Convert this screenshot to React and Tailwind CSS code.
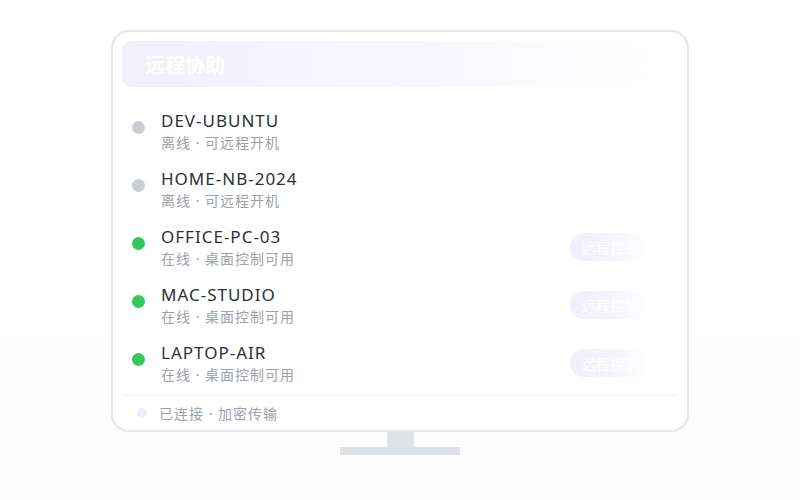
import React from 'react'

const devices = [
  { name: 'DEV-UBUNTU', online: false },
  { name: 'HOME-NB-2024', online: false },
  { name: 'OFFICE-PC-03', online: true },
  { name: 'MAC-STUDIO', online: true },
  { name: 'LAPTOP-AIR', online: true },
]

const App = () => {
  return (
    <div
      className="w-[800px] h-[500px] flex flex-col items-center pt-[30px] bg-gradient-to-b from-white from-50% to-[#fcfcfd]"
      style={{ fontFamily: '"Noto Sans", "Noto Sans CJK SC", sans-serif' }}
    >
      {/* monitor */}
      <div className="w-[578px] h-[402px] bg-white border-2 border-[#e4e6ea] rounded-[18px] px-[9px] pt-[9px] flex flex-col">
        {/* header */}
        <div className="h-[46px] rounded-[10px] bg-gradient-to-r from-[#f2effd] via-[#f8f6fe] to-white flex items-center justify-between pl-[23px] pr-[22px] pt-[3px] mr-[1px]">
          <span className="text-white text-[20px] font-bold">远程协助</span>
          <span className="text-white/60 text-[13px]">在线 3</span>
        </div>

        {/* device list */}
        <div className="flex-1 flex flex-col pt-[9px]">
          {devices.map((d) => (
            <div key={d.name} className="h-[58px] flex items-start pl-[10px] pr-[26px]">
              <div
                className={
                  'mt-[25px] w-[13px] h-[13px] rounded-full shrink-0 ' +
                  (d.online ? 'bg-[#34c75a]' : 'bg-[#c9cdd4]')
                }
              />
              <div className="ml-[16px] pt-[16px] flex flex-col leading-none">
                <span className="text-[17px] text-[#2d3036] tracking-[1px]">{d.name}</span>
                <span className="text-[14px] text-[#9ca1aa] mt-[7px] tracking-[1px]">
                  {d.online ? '在线 · 桌面控制可用' : '离线 · 可远程开机'}
                </span>
              </div>
              {d.online && (
                <div className="ml-auto mt-[21px] mr-[2px] w-[80px] h-[28px] rounded-full bg-gradient-to-r from-[#f1eefd] via-[#f5f3fe] to-white flex items-center pl-[12px] overflow-hidden">
                  <span className="text-white text-[14px] whitespace-nowrap">远程控制</span>
                </div>
              )}
            </div>
          ))}
        </div>

        {/* footer */}
        <div className="border-t border-[#f1f2f4] h-[34px] flex items-center pl-[15px] pt-[1px] mb-[1px]">
          <div className="w-[10px] h-[10px] rounded-full bg-[#efecfc]" />
          <span className="ml-[12px] text-[14px] text-[#9ca1aa] tracking-[1px]">已连接 · 加密传输</span>
        </div>
      </div>

      {/* stand */}
      <div className="w-[27px] h-[15px] bg-[#dfe2e6]" />
      <div className="w-[120px] h-[8px] bg-[#dfe2e6]" />
    </div>
  )
}

export default App
